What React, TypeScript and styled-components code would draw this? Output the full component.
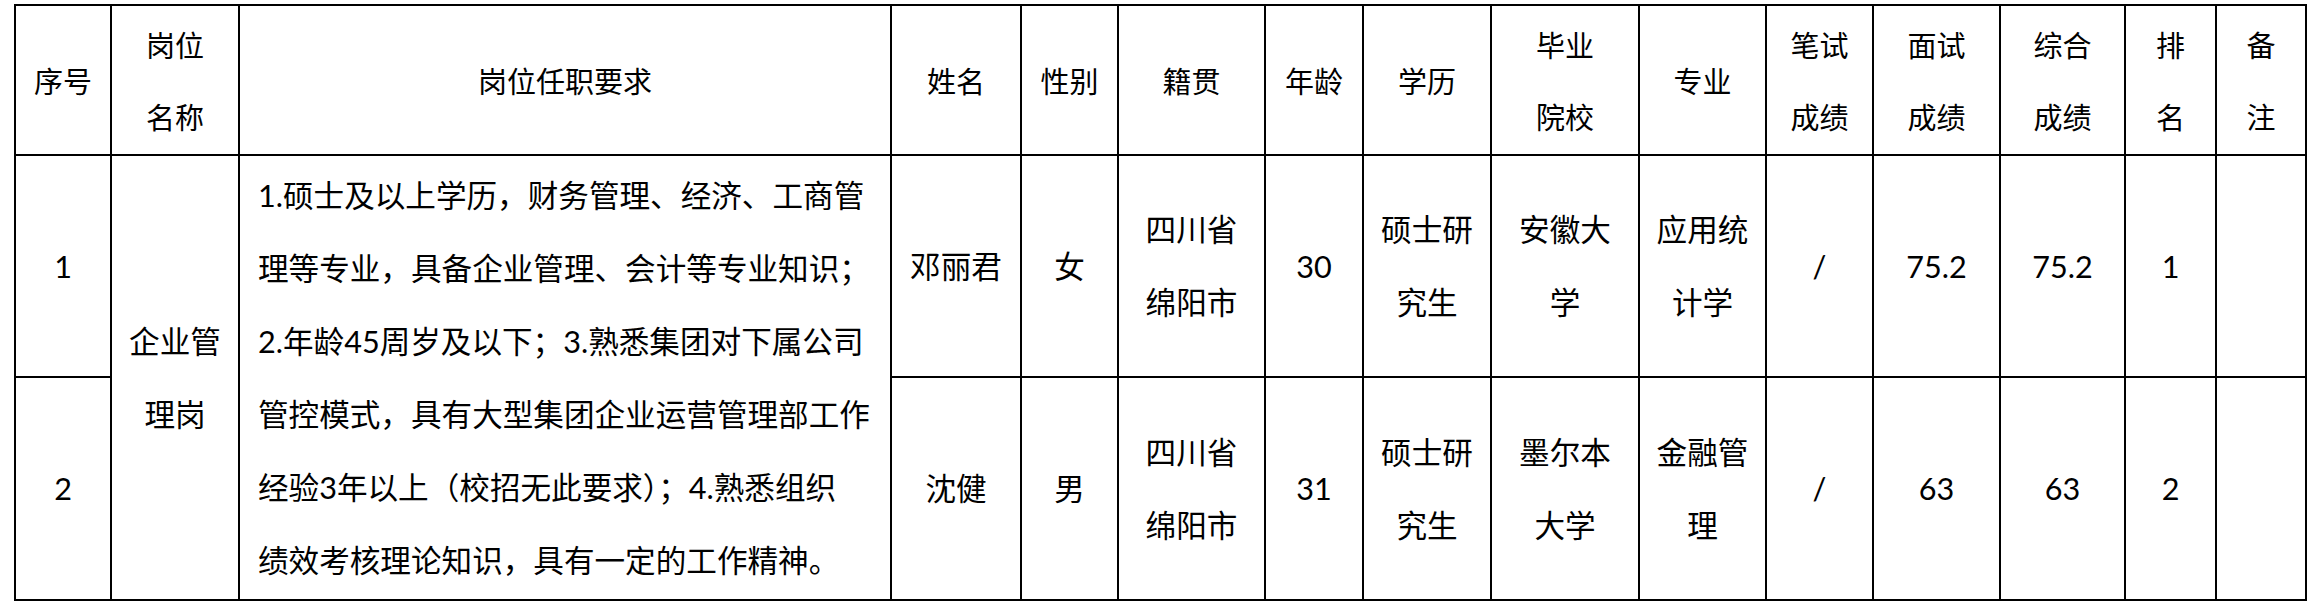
import React from "react";
import styled, { createGlobalStyle } from "styled-components";

const Global = createGlobalStyle`
  html, body { margin: 0; padding: 0; background: #ffffff; }
  body { font-family: "Noto Sans CJK SC", sans-serif; color: #000; }
`;

const Page = styled.div`
  padding: 4px 0 0 14px;
  background: #fff;
`;

const Table = styled.table`
  border-collapse: collapse;
  table-layout: fixed;
  width: 2291px;
`;

const Col = styled.col<{ $w: number }>`
  width: ${(p) => p.$w}px;
`;

const Row = styled.tr<{ $h: number }>`
  height: ${(p) => p.$h}px;
`;

const HeadCell = styled.th`
  border: 2px solid #000;
  padding: 0;
  font-family: "Noto Sans CJK SC", sans-serif;
  font-weight: 400;
  font-size: 29px;
  line-height: 72px;
  text-align: center;
  vertical-align: middle;
  white-space: nowrap;
`;

const Cell = styled.td<{ $left?: boolean }>`
  border: 2px solid #000;
  padding: ${(p) => (p.$left ? "0 0 0 18px" : "0")};
  font-family: "Lato", "Noto Sans CJK SC", sans-serif;
  font-weight: 400;
  font-size: 30.6px;
  line-height: 73px;
  text-align: ${(p) => (p.$left ? "left" : "center")};
  vertical-align: middle;
  white-space: nowrap;
`;

const Line = styled.span`
  display: block;
`;

const widths = [96, 128, 652, 130, 97, 147, 98, 128, 148, 127, 107, 127, 125, 91, 90];

const headers: string[][] = [
  ["序号"],
  ["岗位", "名称"],
  ["岗位任职要求"],
  ["姓名"],
  ["性别"],
  ["籍贯"],
  ["年龄"],
  ["学历"],
  ["毕业", "院校"],
  ["专业"],
  ["笔试", "成绩"],
  ["面试", "成绩"],
  ["综合", "成绩"],
  ["排", "名"],
  ["备", "注"],
];

const requirement = [
  "1.硕士及以上学历，财务管理、经济、工商管",
  "理等专业，具备企业管理、会计等专业知识；",
  "2.年龄45周岁及以下；3.熟悉集团对下属公司",
  "管控模式，具有大型集团企业运营管理部工作",
  "经验3年以上（校招无此要求）；4.熟悉组织",
  "绩效考核理论知识，具有一定的工作精神。",
];

type Person = {
  no: string;
  name: string;
  sex: string;
  origin: string[];
  age: string;
  edu: string[];
  school: string[];
  major: string[];
  written: string;
  interview: string;
  total: string;
  rank: string;
  note: string;
};

const people: Person[] = [
  {
    no: "1",
    name: "邓丽君",
    sex: "女",
    origin: ["四川省", "绵阳市"],
    age: "30",
    edu: ["硕士研", "究生"],
    school: ["安徽大", "学"],
    major: ["应用统", "计学"],
    written: "/",
    interview: "75.2",
    total: "75.2",
    rank: "1",
    note: "",
  },
  {
    no: "2",
    name: "沈健",
    sex: "男",
    origin: ["四川省", "绵阳市"],
    age: "31",
    edu: ["硕士研", "究生"],
    school: ["墨尔本", "大学"],
    major: ["金融管", "理"],
    written: "/",
    interview: "63",
    total: "63",
    rank: "2",
    note: "",
  },
];

const Lines = ({ items }: { items: string[] }) => (
  <>
    {items.map((t, i) => (
      <Line key={i}>{t}</Line>
    ))}
  </>
);

export default function App() {
  const rowHeights = [222, 223];
  return (
    <Page>
      <Global />
      <Table>
        <colgroup>
          {widths.map((w, i) => (
            <Col key={i} $w={w} />
          ))}
        </colgroup>
        <thead>
          <Row $h={150}>
            {headers.map((h, i) => (
              <HeadCell key={i}>
                <Lines items={h} />
              </HeadCell>
            ))}
          </Row>
        </thead>
        <tbody>
          {people.map((p, idx) => (
            <Row key={p.no} $h={rowHeights[idx]}>
              <Cell>{p.no}</Cell>
              {idx === 0 && (
                <>
                  <Cell rowSpan={2}>
                    <Lines items={["企业管", "理岗"]} />
                  </Cell>
                  <Cell rowSpan={2} $left>
                    <Lines items={requirement} />
                  </Cell>
                </>
              )}
              <Cell>{p.name}</Cell>
              <Cell>{p.sex}</Cell>
              <Cell>
                <Lines items={p.origin} />
              </Cell>
              <Cell>{p.age}</Cell>
              <Cell>
                <Lines items={p.edu} />
              </Cell>
              <Cell>
                <Lines items={p.school} />
              </Cell>
              <Cell>
                <Lines items={p.major} />
              </Cell>
              <Cell>{p.written}</Cell>
              <Cell>{p.interview}</Cell>
              <Cell>{p.total}</Cell>
              <Cell>{p.rank}</Cell>
              <Cell>{p.note}</Cell>
            </Row>
          ))}
        </tbody>
      </Table>
    </Page>
  );
}
